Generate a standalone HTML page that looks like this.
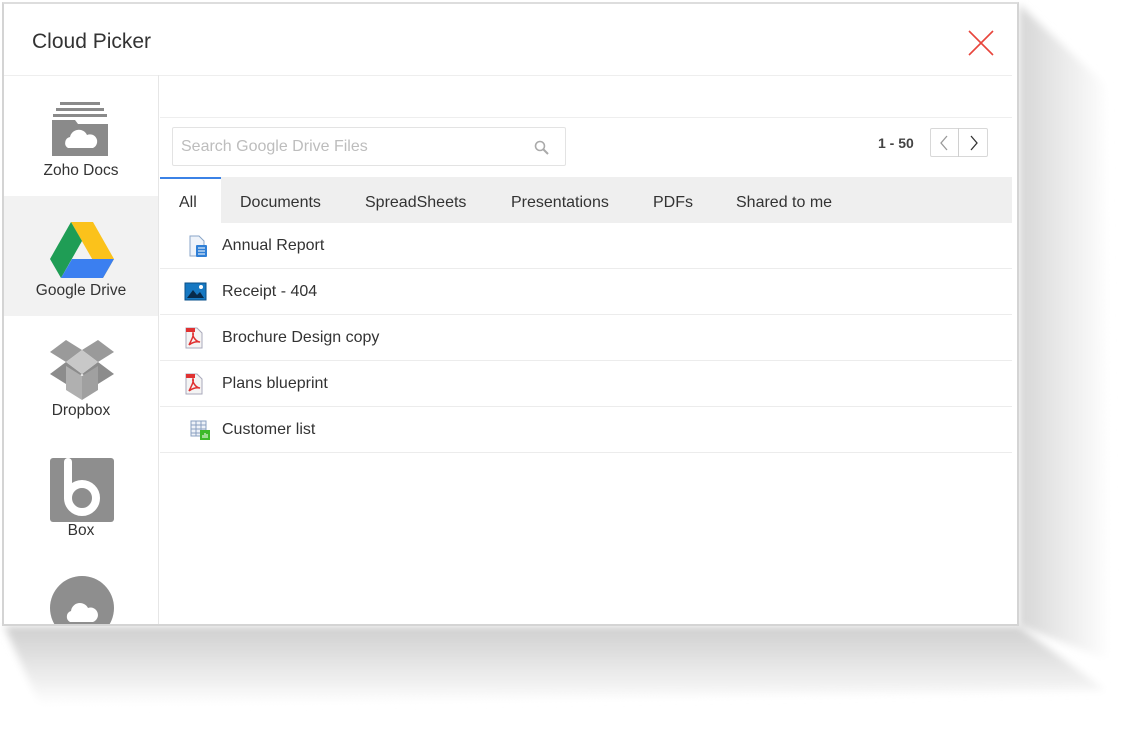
<!DOCTYPE html>
<html><head><meta charset="utf-8"><style>
*{margin:0;padding:0;box-sizing:border-box}
body{width:1130px;height:730px;background:#fff;position:relative;overflow:hidden;font-family:"Liberation Sans",Arial,sans-serif;color:#333}
.a{position:absolute}
#dlg{left:2px;top:2px;width:1017px;height:624px;background:#fff;border:2px solid #d4d4d4;border-top-color:#ddd;overflow:hidden}
.t{font-size:16px;color:#333;white-space:nowrap}
.row{left:156px;width:852px;height:46px;border-bottom:1px solid #ececec}
.row span{position:absolute;left:62px;top:14px;font-size:16px;color:#333}
.lbl{width:154px;text-align:center;font-size:15.5px;color:#333}
</style></head><body>
<svg class="a" style="left:0;top:0" width="1130" height="730">
<defs>
<linearGradient id="g1" x1="0" y1="0" x2="0" y2="1"><stop offset="0" stop-color="#cfcfcf"/><stop offset="0.5" stop-color="#e6e6e6"/><stop offset="1" stop-color="#fff"/></linearGradient>
<linearGradient id="g2" x1="0" y1="0" x2="1" y2="0"><stop offset="0" stop-color="#d6d6d6"/><stop offset="0.5" stop-color="#ebebeb"/><stop offset="1" stop-color="#fff"/></linearGradient>
<filter id="b" x="-20%" y="-20%" width="140%" height="140%"><feGaussianBlur stdDeviation="4"/></filter>
</defs>
<polygon points="1019,4 1105,85 1110,660 1019,626" fill="url(#g2)" filter="url(#b)"/>
<polygon points="4,626 1019,626 1105,690 40,705" fill="url(#g1)" filter="url(#b)"/>
</svg>
<div id="dlg" class="a">
 <div class="a" style="left:28px;top:26px;font-size:21px;color:#333">Cloud Picker</div>
 <svg class="a" style="left:964px;top:26px" width="26" height="26"><path d="M1 1L25 25M25 1L1 25" stroke="#e8453c" stroke-width="1.6"/></svg>
 <div class="a" style="left:0;top:71px;width:1008px;height:1px;background:#eee"></div>
 <div class="a" style="left:154px;top:71px;width:1px;height:560px;background:#e6e6e6"></div>
 <div class="a" style="left:0;top:192px;width:154px;height:120px;background:#f2f2f2"></div>
 <svg class="a" style="left:46px;top:98px" width="62" height="56">
  <rect x="10" y="0" width="40" height="3" fill="#8a8a8a"/><rect x="6" y="6" width="48" height="3" fill="#8a8a8a"/><rect x="3" y="12" width="54" height="3" fill="#8a8a8a"/>
  <path d="M2 18H25L28 22H58V54H2Z" fill="#8a8a8a"/>
  <path d="M18 46a6 6 0 0 1 2-11a9 9 0 0 1 17-2a7 7 0 0 1 6 13Z" fill="#fff"/>
 </svg>
 <div class="a lbl" style="top:158px">Zoho Docs</div>
 <svg class="a" style="left:46px;top:218px" width="64" height="56">
  <polygon points="21,0 43,0 64,37 53,56" fill="#fbc21b"/>
  <polygon points="21,0 0,37 11,56 32,19" fill="#1f9d55"/>
  <polygon points="11,56 53,56 64,37 22,37" fill="#3b7ff0"/>
 </svg>
 <div class="a lbl" style="top:278px">Google Drive</div>
 <svg class="a" style="left:45px;top:334px" width="66" height="64">
  <polygon points="33,12 17,2 1,14 17,24" fill="#9a9a9a"/>
  <polygon points="33,12 49,2 65,14 49,24" fill="#9a9a9a"/>
  <polygon points="17,24 1,36 17,46 33,36" fill="#8c8c8c"/>
  <polygon points="49,24 65,36 49,46 33,36" fill="#8c8c8c"/>
  <polygon points="17,24 33,12 49,24 33,36" fill="#c8c8c8"/>
  <polygon points="17,28 33,38 33,62 17,52" fill="#b0b0b0"/>
  <polygon points="49,28 33,38 33,62 49,52" fill="#a0a0a0"/>
 </svg>
 <div class="a lbl" style="top:398px">Dropbox</div>
 <svg class="a" style="left:46px;top:454px" width="64" height="64">
  <rect x="0" y="0" width="64" height="64" rx="3" fill="#8e8e8e"/>
  <path d="M18 4V40" stroke="#fff" stroke-width="8" stroke-linecap="round"/>
  <circle cx="32" cy="40" r="14" fill="none" stroke="#fff" stroke-width="8"/>
 </svg>
 <div class="a lbl" style="top:518px">Box</div>
 <svg class="a" style="left:46px;top:572px" width="64" height="50">
  <circle cx="32" cy="32" r="32" fill="#8e8e8e"/>
  <path d="M20 46a6 6 0 0 1 1-11a9 9 0 0 1 17-3a7 7 0 0 1 5 14Z" fill="#fff"/>
 </svg>
 <div class="a" style="left:156px;top:113px;width:852px;height:1px;background:#eee"></div>
 <div class="a" style="left:168px;top:123px;width:394px;height:39px;border:1px solid #e3e3e3;border-radius:2px"></div>
 <div class="a" style="left:177px;top:134px;font-size:16px;color:#bdbdbd">Search Google Drive Files</div>
 <svg class="a" style="left:530px;top:136px" width="16" height="16"><circle cx="6" cy="6" r="4.5" fill="none" stroke="#aaa" stroke-width="1.6"/><path d="M9.5 9.5L14 14" stroke="#aaa" stroke-width="2"/></svg>
 <div class="a" style="left:874px;top:131px;font-size:14px;font-weight:bold;color:#444">1 - 50</div>
 <div class="a" style="left:926px;top:124px;width:58px;height:29px;border:1px solid #d8d8d8;border-radius:2px"></div>
 <div class="a" style="left:954px;top:124px;width:1px;height:29px;background:#d0d0d0"></div>
 <svg class="a" style="left:933px;top:131px" width="45" height="16"><path d="M10 1L4 8L10 15" fill="none" stroke="#999" stroke-width="1.3"/><path d="M34 1L40 8L34 15" fill="none" stroke="#333" stroke-width="1.3"/></svg>
 <div class="a" style="left:156px;top:173px;width:852px;height:46px;background:#efefef"></div>
 <div class="a" style="left:156px;top:173px;width:61px;height:46px;background:#fff;border-top:2px solid #3b82e6"></div>
 <div class="a t" style="left:175px;top:190px">All</div>
 <div class="a t" style="left:236px;top:190px">Documents</div>
 <div class="a t" style="left:361px;top:190px">SpreadSheets</div>
 <div class="a t" style="left:507px;top:190px">Presentations</div>
 <div class="a t" style="left:649px;top:190px">PDFs</div>
 <div class="a t" style="left:732px;top:190px">Shared to me</div>
 <div class="a row" style="top:219px"><span>Annual Report</span>
  <svg class="a" style="left:26px;top:12px" width="24" height="24"><path d="M4 1H13L18 6V21H4Z" fill="#eef3fa" stroke="#8aa6c8"/><rect x="10" y="10" width="11" height="12" rx="1" fill="#2f7fd6"/><path d="M12 13H19M12 16H19M12 19H19" stroke="#fff"/></svg></div>
 <div class="a row" style="top:265px"><span>Receipt - 404</span>
  <svg class="a" style="left:24px;top:13px" width="24" height="20"><rect x="1" y="1" width="21" height="17" fill="#1678c2" stroke="#0a4f88"/><path d="M3 16L9 8L13 13L16 10L20 16Z" fill="#082a4a"/><circle cx="17" cy="5" r="2" fill="#fff"/></svg></div>
 <div class="a row" style="top:311px"><span>Brochure Design copy</span>
  <svg class="a" style="left:24px;top:12px" width="22" height="22"><path d="M2 1H13L18 6V21H2Z" fill="#f4f4f4" stroke="#aab"/><rect x="2" y="1" width="9" height="4" fill="#e03131"/><path d="M5 18C8 12 10 8 9 6C8 9 12 15 16 15C12 14 7 16 5 18Z" fill="none" stroke="#e03131" stroke-width="1.5"/></svg></div>
 <div class="a row" style="top:357px"><span>Plans blueprint</span>
  <svg class="a" style="left:24px;top:12px" width="22" height="22"><path d="M2 1H13L18 6V21H2Z" fill="#f4f4f4" stroke="#aab"/><rect x="2" y="1" width="9" height="4" fill="#e03131"/><path d="M5 18C8 12 10 8 9 6C8 9 12 15 16 15C12 14 7 16 5 18Z" fill="none" stroke="#e03131" stroke-width="1.5"/></svg></div>
 <div class="a row" style="top:403px"><span>Customer list</span>
  <svg class="a" style="left:30px;top:13px" width="22" height="22"><rect x="1" y="1" width="15" height="15" fill="#eef2f8" stroke="#8aa0c0"/><path d="M1 5H16M1 9H16M1 13H16M6 1V16M11 1V16" stroke="#8aa0c0"/><rect x="10" y="10" width="10" height="10" fill="#3dba2a"/><path d="M13 18V15M15 18V13M17 18V14" stroke="#fff"/></svg></div>
</div>
</body></html>
